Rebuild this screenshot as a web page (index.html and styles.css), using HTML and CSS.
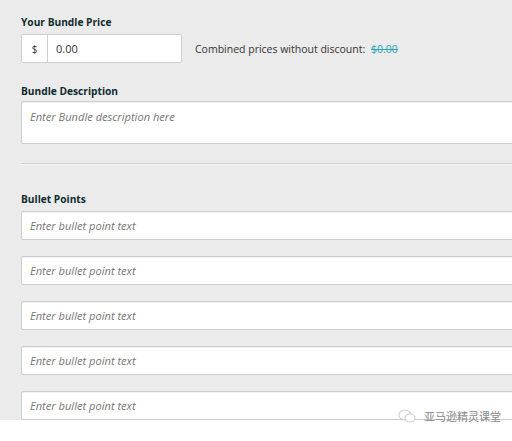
FILE: index.html
```html
<!DOCTYPE html>
<html>
<head>
<meta charset="utf-8">
<link rel="stylesheet" href="styles.css">
</head>
<body>
<div class="page">
  <div class="form">
    <div class="label first">Your Bundle Price</div>
    <div class="price-row">
      <div class="price-group">
        <span class="currency">$</span>
        <span class="price-input">0.00</span>
      </div>
      <div class="combined">Combined prices without discount: <span class="strike">$0.00</span></div>
    </div>
    <div class="label desc-label">Bundle Description</div>
    <div class="field textarea"><span class="ph">Enter Bundle description here</span></div>
    <div class="divider"></div>
    <div class="label bullets-label">Bullet Points</div>
    <div class="bullets">
      <div class="field"><span class="ph">Enter bullet point text</span></div>
      <div class="field"><span class="ph">Enter bullet point text</span></div>
      <div class="field"><span class="ph">Enter bullet point text</span></div>
      <div class="field"><span class="ph">Enter bullet point text</span></div>
      <div class="field"><span class="ph">Enter bullet point text</span></div>
    </div>
  </div>
  <div class="footer"></div>
  <div class="watermark">
    <svg width="18" height="14" viewBox="0 0 18 14"><ellipse cx="7" cy="6" rx="6" ry="5" fill="none" stroke="#d2d2d2" stroke-width="1.2"/><ellipse cx="12" cy="9" rx="5" ry="4" fill="#fff" stroke="#d2d2d2" stroke-width="1.2"/></svg>
    <span>亚马逊精灵课堂</span>
  </div>
</div>
</body>
</html>
```
FILE: styles.css
```css
html, body {
  margin: 0;
  padding: 0;
}
body {
  background: #ebebeb;
  font-family: "Open Sans", "Liberation Sans", sans-serif;
  width: 512px;
  height: 441px;
  overflow: hidden;
}
.page {
  position: relative;
  width: 512px;
  height: 441px;
  overflow: hidden;
}
.form {
  padding-left: 21px;
  width: 520px;
}
.label {
  font-size: 10.2px;
  font-weight: 700;
  color: #0f2b30;
  line-height: 14px;
}
.first {
  padding-top: 15px;
}
.price-row {
  display: flex;
  align-items: center;
  margin-top: 5px;
  height: 29px;
}
.price-group {
  display: flex;
  height: 29px;
  width: 161px;
  background: #fff;
  border: 1px solid #cfcfcf;
  border-radius: 2px;
  box-sizing: border-box;
}
.currency {
  width: 25px;
  border-right: 1px solid #cfcfcf;
  display: flex;
  align-items: center;
  justify-content: center;
  font-size: 10px;
  color: #333;
}
.price-input {
  display: flex;
  align-items: center;
  padding-left: 8px;
  font-size: 11px;
  color: #333;
}
.combined {
  margin-left: 13px;
  font-size: 10.5px;
  color: #333;
}
.strike {
  color: #27a5b8;
  text-decoration: line-through;
  margin-left: 3px;
}
.desc-label {
  margin-top: 21px;
}
.field {
  background: #fff;
  border: 1px solid #cdcdcd;
  border-radius: 2px;
  box-shadow: inset 0 1px 1px rgba(0,0,0,0.06);
  height: 29px;
  box-sizing: border-box;
  padding-left: 8px;
  display: flex;
  align-items: center;
}
.textarea {
  margin-top: 3px;
  height: 43px;
  align-items: flex-start;
  padding-top: 7px;
}
.ph {
  font-size: 11.1px;
  font-style: italic;
  color: #777;
}
.divider {
  margin-top: 19px;
  height: 1px;
  background: #cfcfcf;
  border-bottom: 1px solid #f6f6f6;
}
.bullets-label {
  margin-top: 27px;
}
.bullets {
  margin-top: 5px;
  display: flex;
  flex-direction: column;
  gap: 16px;
}
.footer {
  position: absolute;
  left: 0;
  top: 420px;
  width: 512px;
  height: 21px;
  background: #fff;
}
.watermark {
  position: absolute;
  left: 398px;
  top: 408px;
  display: flex;
  align-items: center;
  gap: 8px;
  font-family: "Noto Sans CJK SC", sans-serif;
  font-size: 11px;
  color: #8a8a8a;
}
```
